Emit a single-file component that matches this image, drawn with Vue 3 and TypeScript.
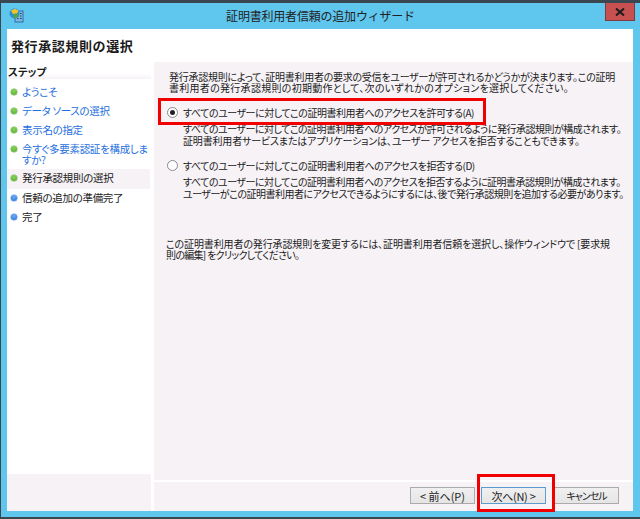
<script setup lang="ts">
interface Step { label: string; state: 'done' | 'current' | 'todo' }
const steps: Step[] = [
  { label: 'ようこそ', state: 'done' },
  { label: 'データ ソースの選択', state: 'done' },
  { label: '表示名の指定', state: 'done' },
  { label: '今すぐ多要素認証を構成しますか?', state: 'done' },
  { label: '発行承認規則の選択', state: 'current' },
  { label: '信頼の追加の準備完了', state: 'todo' },
  { label: '完了', state: 'todo' }
]
</script>

<template>
  <div class="window">
    <div class="titlebar">
      <svg class="app-icon" width="15" height="15" viewBox="0 0 15 15">
        <rect x="6" y="3" width="8" height="11" fill="#7fb4dc" stroke="#2f6ea3" />
        <path d="M8 5.5h1.5M11 5.5h1.5M8 8h1.5M11 8h1.5M8 10.5h1.5M11 10.5h1.5" stroke="#17476f" />
        <circle cx="5.5" cy="5.5" r="5" fill="#2f8fd0" />
        <path d="M2 2.5 6 .7l3.5 2L8 5.5 4 6z" fill="#f2c22e" />
        <path d="M4.5 6 8.5 5.5l1 3-4.5 2z" fill="#4fa83c" />
      </svg>
      <div class="title">証明書利用者信頼の追加ウィザード</div>
      <div class="close">
        <svg width="10" height="8" viewBox="0 0 10 8">
          <path d="M1 0.5l8 7M9 0.5l-8 7" stroke="#1c1c1c" stroke-width="2" />
        </svg>
      </div>
    </div>
    <div class="client">
      <div class="header">発行承認規則の選択</div>
      <div class="body">
        <aside class="side">
          <div class="steps">
            <div class="steps-title">ステップ</div>
            <div v-for="s in steps" :key="s.label" class="step" :class="s.state">
              <span class="dot"></span>
              <span class="step-label">{{ s.label }}</span>
            </div>
          </div>
          <div class="side-foot"></div>
        </aside>
        <main class="panel">
          <div class="content">
            <div class="para intro">
              <div class="line i1">発行承認規則によって、証明書利用者の要求の受信をユーザーが許可されるかどうかが決まります。この証明</div>
              <div class="line i2">書利用者の発行承認規則の初期動作として、次のいずれかのオプションを選択してください。</div>
            </div>
            <label class="option first">
              <span class="radio checked"></span>
              <span class="line opt">すべてのユーザーに対してこの証明書利用者へのアクセスを許可する(A)</span>
            </label>
            <div class="para sub">
              <div class="line s1">すべてのユーザーに対してこの証明書利用者へのアクセスが許可されるように発行承認規則が構成されます。</div>
              <div class="line s2">証明書利用者サービスまたはアプリケーションは、ユーザー アクセスを拒否することもできます。</div>
            </div>
            <label class="option second">
              <span class="radio"></span>
              <span class="line opt">すべてのユーザーに対してこの証明書利用者へのアクセスを拒否する(D)</span>
            </label>
            <div class="para sub">
              <div class="line s1">すべてのユーザーに対してこの証明書利用者へのアクセスを拒否するように証明書承認規則が構成されます。</div>
              <div class="line s1">ユーザーがこの証明書利用者にアクセスできるようにするには、後で発行承認規則を追加する必要があります。</div>
            </div>
            <div class="para note">
              <div class="line n1">この証明書利用者の発行承認規則を変更するには、証明書利用者信頼を選択し、操作ウィンドウで [要求規</div>
              <div class="line n2">則の編集] をクリックしてください。</div>
            </div>
          </div>
          <div class="footer">
            <button class="btn">&lt; 前へ(P)</button>
            <button class="btn primary">次へ(N) &gt;</button>
            <button class="btn cancel">キャンセル</button>
          </div>
        </main>
      </div>
    </div>
    <div class="mark mark-option"></div>
    <div class="mark mark-next"></div>
  </div>
</template>

<style>
html, body { margin: 0; background: #5fc6ee; }
</style>

<style scoped>
.window {
  position: relative;
  width: 640px;
  height: 519px;
  box-sizing: border-box;
  display: flex;
  flex-direction: column;
  background: #5fc6ee;
  border-top: 3px solid #3a4650;
  border-left: 1px solid #3a4650;
  border-bottom: 2px solid #3a4650;
  font-family: "Noto Sans CJK JP", "Noto Sans", sans-serif;
  color: #1a1a1a;
  overflow: hidden;
}
.titlebar {
  height: 26px;
  flex: none;
  display: flex;
  align-items: flex-start;
  position: relative;
}
.app-icon { margin: 5px 0 0 8px; }
.title {
  position: absolute;
  left: 0;
  right: 0;
  top: 4px;
  text-align: center;
  font-size: 12px;
  line-height: 18px;
  letter-spacing: -0.2px;
  color: #222;
}
.close {
  position: absolute;
  right: 5px;
  top: 0;
  width: 30px;
  height: 18px;
  box-sizing: border-box;
  background: #c75050;
  border: 1px solid #7d3a3a;
  border-top: 0;
  display: flex;
  align-items: center;
  justify-content: center;
}
.client {
  flex: 1;
  min-height: 0;
  margin: 0 7px 6px 6px;
  background: #fff;
  display: flex;
  flex-direction: column;
}
.header {
  height: 33px;
  flex: none;
  padding-left: 4px;
  font-size: 13px;
  font-weight: 700;
  line-height: 34px;
  letter-spacing: 0.6px;
}
.body {
  flex: 1;
  min-height: 0;
  display: flex;
  gap: 3px;
}
.side {
  width: 144px;
  flex: none;
  display: flex;
  flex-direction: column;
}
.steps { flex: 1; padding-top: 3px; }
.side-foot { height: 37px; background: #f6f2f6; }
.steps-title {
  height: 14px;
  line-height: 14px;
  font-size: 10.5px;
  font-weight: 700;
  font-feature-settings: "palt";
  padding-left: 1px;
  background: linear-gradient(#fff 60%, #f6f2f6);
  margin-bottom: 4px;
}
.step {
  display: flex;
  align-items: flex-start;
  padding: 3px 0 4px 4px;
  margin-right: 1px;
  font-size: 10.5px;
  line-height: 11px;
  font-feature-settings: "palt";
  letter-spacing: -0.3px;
  color: #1a1a1a;
  gap: 5px;
  min-height: 12px;
}
.step.done { color: #1f6fe0; }
.step.current { background: #f6f2f6; padding: 3px 0 5px 4px; }
.step-label { width: 127px; }
.dot {
  width: 6px;
  height: 6px;
  flex: none;
  margin-top: 3px;
  border-radius: 50%;
  background: radial-gradient(circle at 50% 35%, #8bd65c, #4ea52a);
  box-shadow: 0 0 0 .5px #79b060;
}
.step.todo .dot {
  background: radial-gradient(circle at 50% 35%, #6fb0f5, #1f68d8);
  box-shadow: 0 0 0 .5px #6a9ad8;
}
.panel {
  flex: 1;
  min-width: 0;
  display: flex;
  flex-direction: column;
  background: #f6f2f6;
}
.content { flex: 1; padding: 9px 0 0 15px; font-size: 10px; }
.line {
  display: block;
  height: 11px;
  line-height: 11px;
  white-space: nowrap;
  font-feature-settings: "palt";
}
.i1 { letter-spacing: -0.27px; }
.i2 { letter-spacing: 0.28px; }
.opt { letter-spacing: -0.48px; }
.s1 { letter-spacing: -0.5px; }
.s2 { letter-spacing: -0.16px; }
.n1 { letter-spacing: -0.12px; }
.n2 { letter-spacing: -0.7px; }
.para { display: block; }
.option {
  display: flex;
  align-items: center;
  gap: 5px;
  height: 12px;
  margin-left: -2px;
}
.option.first { margin-top: 13px; }
.option.second { margin-top: 13px; }
.sub { margin: 5px 0 0 14px; }
.sub .line + .line { margin-top: 1px; }
.note { margin: 39px 0 0 -3px; }
.radio {
  width: 11px;
  height: 11px;
  flex: none;
  box-sizing: border-box;
  border: 1px solid #8a8a8a;
  border-radius: 50%;
  background: #fff;
  position: relative;
}
.radio.checked::after {
  content: "";
  position: absolute;
  left: 2px;
  top: 2px;
  width: 5px;
  height: 5px;
  border-radius: 50%;
  background: #222;
}
.footer {
  height: 31px;
  flex: none;
  border-top: 2px solid #fff;
  display: flex;
  justify-content: flex-end;
  align-items: flex-start;
  padding: 5px 14px 0 0;
  box-sizing: border-box;
}
.btn {
  width: 65px;
  height: 17px;
  padding: 0;
  box-sizing: border-box;
  border: 1px solid #ababab;
  background: linear-gradient(#f0f0f0, #e5e5e5);
  font: inherit;
  font-size: 11px;
  line-height: 14px;
  font-feature-settings: "palt";
  color: #222;
  margin-left: 6px;
}
.btn.primary { border-color: #5a9bd0; letter-spacing: -0.3px; }
.btn.cancel { margin-left: 8px; font-size: 10px; letter-spacing: -1px; }
.mark {
  position: absolute;
  box-sizing: border-box;
  border: 3px solid #f00000;
  pointer-events: none;
}
.mark-option { left: 157px; top: 95px; width: 328px; height: 27px; }
.mark-next { left: 476px; top: 471px; width: 78px; height: 38px; }
</style>
